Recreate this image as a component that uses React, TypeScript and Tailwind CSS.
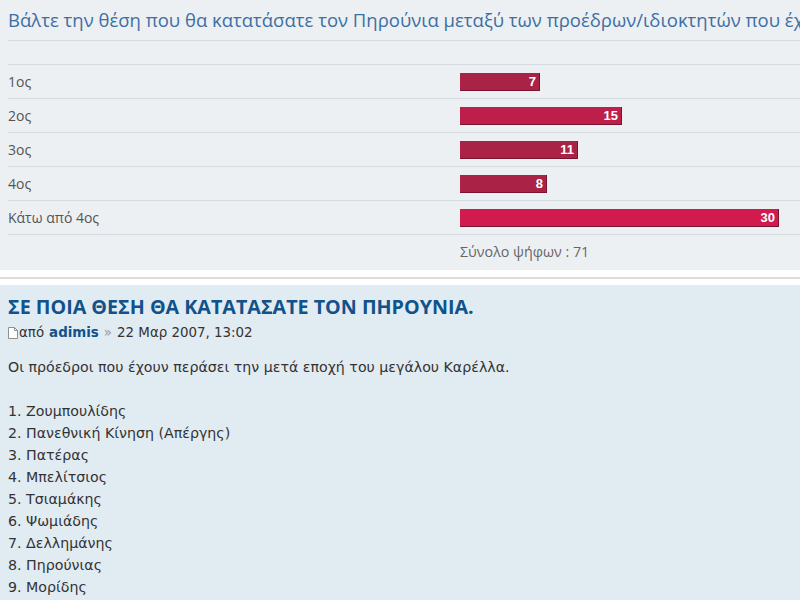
const options = [
  { label: "1ος", votes: 7, width: 80, color: "bg-[#aa2346]" },
  { label: "2ος", votes: 15, width: 162, color: "bg-[#be1e4a]" },
  { label: "3ος", votes: 11, width: 118, color: "bg-[#aa2346]" },
  { label: "4ος", votes: 8, width: 87, color: "bg-[#aa2346]" },
  { label: "Κάτω από 4ος", votes: 30, width: 319, color: "bg-[#d11a4e]" },
];

const names = [
  "Ζουμπουλίδης",
  "Πανεθνική Κίνηση (Απέργης)",
  "Πατέρας",
  "Μπελίτσιος",
  "Τσιαμάκης",
  "Ψωμιάδης",
  "Δελλημάνης",
  "Πηρούνιας",
  "Μορίδης",
];

const PostIcon = () => (
  <svg width="10" height="12" viewBox="0 0 10 12" className="mr-[1px]">
    <path d="M0.5 0.5 H6.5 L9.5 3.5 V11.5 H0.5 Z" fill="#fff" stroke="#8f8f8f" />
    <path d="M6.5 0.5 V3.5 H9.5" fill="none" stroke="#8f8f8f" />
  </svg>
);

const App = () => {
  return (
    <div className="w-[800px] h-[600px] overflow-hidden bg-white">
      <div className="bg-[#ecf0f3] pl-2 pt-[10px] h-[270px] font-['Open_Sans',sans-serif]">
        <h4 className="text-[18.5px] text-[#3d6fa3] whitespace-nowrap overflow-hidden leading-[20px] pb-[10px] border-b border-[#d5dbe0]">
          Βάλτε την θέση που θα κατατάσατε τον Πηρούνια μεταξύ των προέδρων/ιδιοκτητών που έχουν περάσει
        </h4>
        <div className="h-[24px] border-b border-[#d5dbe0]" />
        {options.map((o) => (
          <div key={o.label} className="flex items-center h-[34px] border-b border-[#d5dbe0] text-[14px] text-[#555]">
            <div className="w-[452px]">{o.label}</div>
            <div
              className={`${o.color} h-[18px] border-b border-r border-[#7a1330] text-white font-bold text-[13px] font-['Liberation_Sans',sans-serif] text-right pr-[3px] leading-[17px]`}
              style={{ width: o.width }}
            >
              {o.votes}
            </div>
          </div>
        ))}
        <div className="flex h-[34px] items-center text-[14.3px] text-[#666]">
          <div className="w-[452px]" />
          <div>Σύνολο ψήφων : 71</div>
        </div>
      </div>
      <div className="h-[15px] flex items-center">
        <div className="w-full border-b-2 border-[#dcdcdc]" />
      </div>
      <div className="bg-[#e1ebf2] pl-2 pt-[10px] h-[315px] font-['DejaVu_Sans',Verdana,sans-serif] text-[#333]">
        <h3 className="text-[19.7px] font-bold text-[#105289] leading-[24px] font-['Open_Sans',sans-serif]">
          ΣΕ ΠΟΙΑ ΘΕΣΗ ΘΑ ΚΑΤΑΤΑΣΑΤΕ ΤΟΝ ΠΗΡΟΥΝΙΑ.
        </h3>
        <div className="flex items-center text-[13.4px] mt-[4px] text-[#333]">
          <PostIcon />
          <span>από </span>
          <span className="font-bold text-[#105289] ml-[5px]">adimis</span>
          <span className="ml-[5px] text-[#999]">»</span>
          <span className="ml-[5px]">22 Μαρ 2007, 13:02</span>
        </div>
        <div className="text-[14.2px] leading-[22px] mt-[13px]">
          <p>Οι πρόεδροι που έχουν περάσει την μετά εποχή του μεγάλου Καρέλλα.</p>
          <br />
          <ol>
            {names.map((n, i) => (
              <li key={n}>
                {i + 1}. {n}
              </li>
            ))}
          </ol>
        </div>
      </div>
    </div>
  );
};

export default App;
